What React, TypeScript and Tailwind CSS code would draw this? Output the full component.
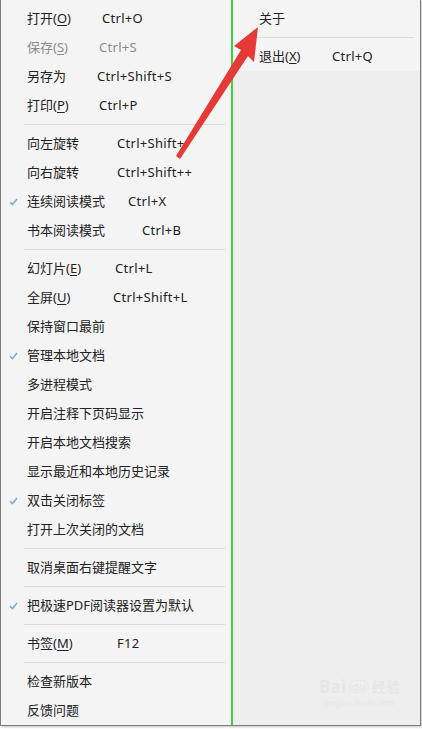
import React from "react"

type Item =
  | { sep: true }
  | {
      sep?: false
      label: string
      key?: string
      shortcut?: string
      w?: string
      checked?: boolean
      disabled?: boolean
    }

const leftItems: Item[] = [
  { label: "打开", key: "O", shortcut: "Ctrl+O", w: "w-[75px]" },
  { label: "保存", key: "S", shortcut: "Ctrl+S", w: "w-[72px]", disabled: true },
  { label: "另存为", shortcut: "Ctrl+Shift+S", w: "w-[70px]" },
  { label: "打印", key: "P", shortcut: "Ctrl+P", w: "w-[72px]" },
  { sep: true },
  { label: "向左旋转", shortcut: "Ctrl+Shift+-", w: "w-[90px]" },
  { label: "向右旋转", shortcut: "Ctrl+Shift++", w: "w-[90px]" },
  { label: "连续阅读模式", shortcut: "Ctrl+X", w: "w-[101px]", checked: true },
  { label: "书本阅读模式", shortcut: "Ctrl+B", w: "w-[115px]" },
  { sep: true },
  { label: "幻灯片", key: "E", shortcut: "Ctrl+L", w: "w-[88px]" },
  { label: "全屏", key: "U", shortcut: "Ctrl+Shift+L", w: "w-[86px]" },
  { label: "保持窗口最前" },
  { label: "管理本地文档", checked: true },
  { label: "多进程模式" },
  { label: "开启注释下页码显示" },
  { label: "开启本地文档搜索" },
  { label: "显示最近和本地历史记录" },
  { label: "双击关闭标签", checked: true },
  { label: "打开上次关闭的文档" },
  { sep: true },
  { label: "取消桌面右键提醒文字" },
  { sep: true },
  { label: "把极速PDF阅读器设置为默认", checked: true },
  { sep: true },
  { label: "书签", key: "M", shortcut: "F12", w: "w-[90px]" },
  { sep: true },
  { label: "检查新版本" },
  { label: "反馈问题" },
]

const rightItems: Item[] = [
  { label: "关于" },
  { sep: true },
  { label: "退出", key: "X", shortcut: "Ctrl+Q", w: "w-[73px]" },
]

function Check() {
  return (
    <svg width="9" height="8" viewBox="0 0 9 8" className="absolute left-[8px] top-[11px]">
      <path d="M1 4.2 L3.4 6.6 L8 1" fill="none" stroke="#7aaad8" strokeWidth="1.5" />
    </svg>
  )
}

function MenuList({ items }: { items: Item[] }) {
  return (
    <div className="flex flex-col pt-[4px]">
      {items.map((it, i) =>
        it.sep ? (
          <div key={i} className="h-[9px] flex items-center pl-[23px] pr-[6px]">
            <div className="h-px w-full bg-[#dcdcdc]" />
          </div>
        ) : (
          <div
            key={i}
            className={`relative h-[29px] flex items-center pl-[26px] whitespace-nowrap ${
              it.disabled ? "text-[#8c8c8c]" : "text-[#222222]"
            }`}
          >
            {it.checked && <Check />}
            <span className={it.w ?? ""}>
              {it.label}
              {it.key && (
                <>
                  (<span className="underline underline-offset-2">{it.key}</span>)
                </>
              )}
            </span>
            {it.shortcut && <span className="tracking-[0.3px]">{it.shortcut}</span>}
          </div>
        )
      )}
    </div>
  )
}

export default function App() {
  return (
    <div
      className="relative w-[422px] h-[729px] bg-white text-[13px] leading-none"
      style={{ fontFamily: '"Noto Sans", "Noto Sans CJK SC", sans-serif' }}
    >
      <div className="flex w-[421px] h-[726px] bg-[#f4f4f4] border-l border-r border-b border-[#7d7d7d] shadow-[1px_1px_2px_rgba(0,0,0,0.25)]">
        <div className="w-[230px] shrink-0">
          <MenuList items={leftItems} />
        </div>
        <div className="flex-1 flex flex-col border-l-2 border-l-[#3fd23f]">
          <MenuList items={rightItems} />
          <div className="flex-1 bg-[#eeeeee] flex flex-col justify-end items-end pr-[20px] pb-[18px]">
            <div className="flex flex-col items-center text-[#e6e6e6]">
              <div className="flex items-center gap-[3px] text-[17px] font-bold">
                <span>Bai</span>
                <span className="rounded-full border border-[#e6e6e6] px-[2px] text-[11px]">du</span>
                <span className="text-[14px]">经验</span>
              </div>
              <span className="text-[8px] mt-[4px]">jingyan.baidu.com</span>
            </div>
          </div>
        </div>
      </div>
      {/* red annotation arrow */}
      <svg className="absolute left-0 top-0 pointer-events-none" width="422" height="729">
        <polygon
          points="258,27 254,62 248,56 180,159 176,156 241,50 234,46"
          fill="#e53a35"
        />
      </svg>
    </div>
  )
}
